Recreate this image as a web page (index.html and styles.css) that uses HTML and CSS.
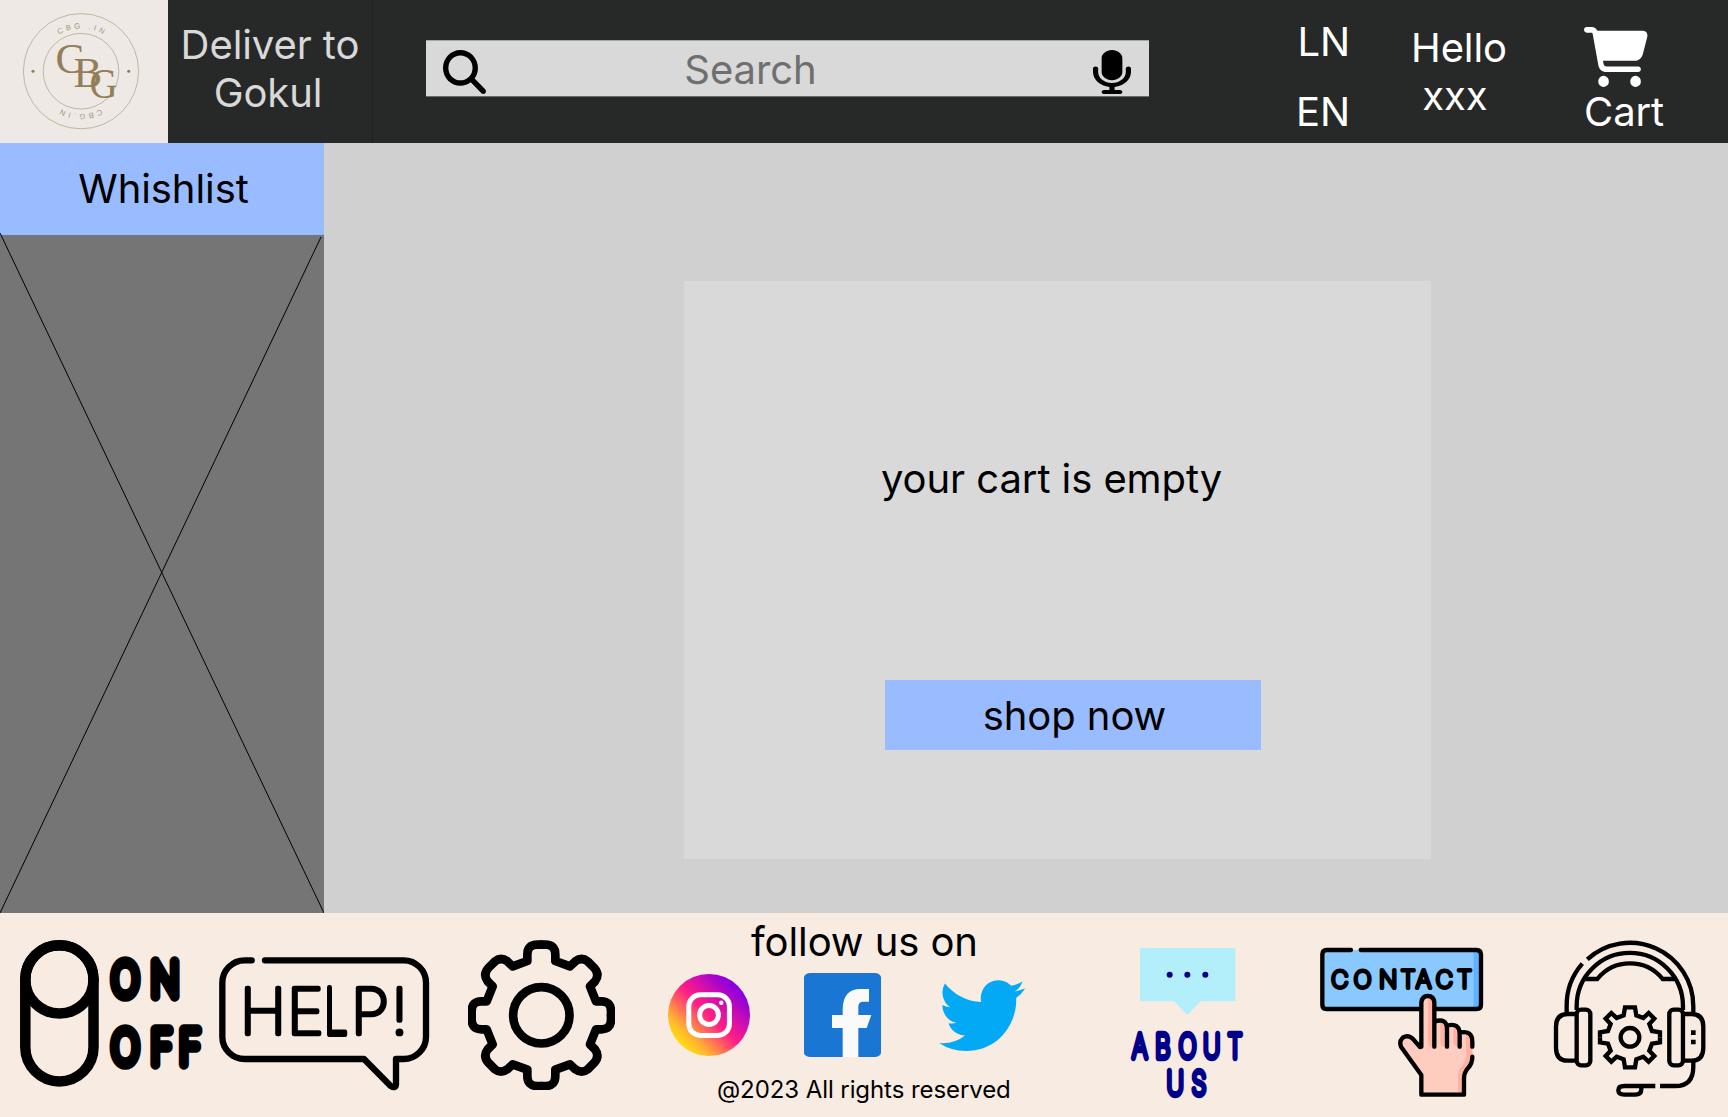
FILE: index.html
```html
<!DOCTYPE html>
<html lang="en">
<head>
<meta charset="utf-8">
<title>Cart</title>
<link rel="stylesheet" href="styles.css">
</head>
<body>
<header class="topbar">
  <svg class="logo" viewBox="0 0 168 143">
    <defs>
      <path id="arc-top" d="M38.2 71.2A42.8 42.8 0 0 1 123.8 71.2"/>
      <path id="arc-bottom" d="M123.8 71.2A42.8 42.8 0 0 1 38.2 71.2"/>
    </defs>
    <g class="logo-rings"><circle cx="81" cy="71.2" r="57.6"/><circle cx="81" cy="71.2" r="37.8"/></g>
    <g class="logo-ink"><circle cx="33" cy="71.3" r="1.5"/><circle cx="128.7" cy="71.3" r="1.5"/></g>
    <text class="logo-ring-text" text-anchor="middle"><textPath href="#arc-top" startOffset="51%">CBG .IN</textPath></text>
    <text class="logo-ring-text" text-anchor="middle"><textPath href="#arc-bottom" startOffset="51%">CBG.IN</textPath></text>
    <g class="logo-mono">
      <text transform="translate(55.5 73)">C</text>
      <text transform="translate(73.5 86.5)">B</text>
      <text transform="translate(89.5 98.3) scale(.9 1)">G</text>
    </g>
  </svg>
  <div class="deliver">Deliver to<br><span class="name">Gokul</span></div>
  <div class="search">
    <svg class="search-icon" viewBox="0 0 512 512" preserveAspectRatio="none"><path d="M416 208c0 45.9-14.9 88.3-40 122.7L502.6 457.4c12.5 12.5 12.5 32.8 0 45.3s-32.8 12.5-45.3 0L330.7 376c-34.4 25.2-76.8 40-122.7 40C93.1 416 0 322.9 0 208S93.1 0 208 0S416 93.1 416 208zM208 352a144 144 0 1 0 0-288 144 144 0 1 0 0 288z"/></svg>
    <span class="search-label">Search</span>
    <svg class="mic-icon" viewBox="16 0 352 512" preserveAspectRatio="none"><path d="M192 0C139 0 96 43 96 96V256c0 53 43 96 96 96s96-43 96-96V96c0-53-43-96-96-96zM64 216c0-13.3-10.7-24-24-24s-24 10.7-24 24v40c0 89.1 66.2 162.7 152 174.4V464H120c-13.3 0-24 10.7-24 24s10.7 24 24 24h144c13.3 0 24-10.7 24-24s-10.7-24-24-24H216V430.4c85.8-11.7 152-85.3 152-174.4V216c0-13.3-10.7-24-24-24s-24 10.7-24 24v40c0 70.7-57.3 128-128 128s-128-57.3-128-128V216z"/></svg>
  </div>
  <div class="lang"><span>LN</span><span>EN</span></div>
  <div class="hello"><span>Hello</span><span class="user">xxx</span></div>
  <div class="cart">
    <svg class="cart-icon" viewBox="0 0 576 512" preserveAspectRatio="none"><path d="M0 24C0 10.7 10.7 0 24 0H69.5c22 0 41.5 12.8 50.6 32h411c26.3 0 45.5 25 38.6 50.4l-41 152.3c-8.5 31.4-37 53.3-69.5 53.3H170.7l5.4 28.5c2.2 11.3 12.1 19.5 23.6 19.5H488c13.3 0 24 10.7 24 24s-10.7 24-24 24H199.7c-34.6 0-64.3-24.6-70.7-58.5L77.4 54.5c-.7-3.8-4-6.5-7.9-6.5H24C10.7 48 0 37.3 0 24zM128 464a48 48 0 1 1 96 0 48 48 0 1 1-96 0zm336-48a48 48 0 1 1 0 96 48 48 0 1 1 0-96z"/></svg>
    <span>Cart</span>
  </div>
</header>
<main class="content">
  <aside class="sidebar">
    <div class="wishlist">Whishlist</div>
    <svg class="placeholder" viewBox="0 0 324 678"><path d="M0-2L324 678M321 2L0 678"/></svg>
  </aside>
  <section class="stage">
    <div class="card">
      <p class="empty">your cart is empty</p>
      <button class="shop">shop now</button>
    </div>
  </section>
</main>
<footer class="footer">
  <svg class="toggle" viewBox="0 900 210 204">
    <g class="line w10"><rect x="25.3" y="945.3" width="68.2" height="136.1" rx="34.1"/><circle cx="59.4" cy="979.4" r="34.1"/></g>
    <text class="toggle-text" transform="scale(.8 1)" x="139.5 188.5" y="996.5">ON</text>
    <text class="toggle-text" transform="scale(.8 1)" x="139.5 188.5 224" y="1064.5">OFF</text>
  </svg>
  <svg class="help" viewBox="24 48 636 408">
    <path class="line w19" d="M125 61H104A67 67 0 0 0 37 128V290A67 67 0 0 0 104 357H462L542 438Q558 447 558 432V357H580A67 67 0 0 0 648 290V128A67 67 0 0 0 581 61H165"/>
    <text class="help-text" x="90 231" y="281">HE</text>
    <text class="help-text narrow" transform="translate(343 281) scale(.67 1)">L</text>
    <text class="help-text" x="423 543" y="281">P!</text>
  </svg>
  <svg class="gear" viewBox="-220 -226 441 452">
    <defs><path id="cog" d="M0-212H-12Q-42-212-42-182V-163L-86-147L-102-162Q-121-176-139-162L-159-142Q-176-122-161-102L-146-87L-164-42H-180Q-209-42-209-12V0"/></defs>
    <g class="line w26"><use href="#cog"/><use href="#cog" transform="scale(-1 1)"/><use href="#cog" transform="scale(1 -1)"/><use href="#cog" transform="scale(-1 -1)"/><circle r="84.5"/></g>
  </svg>
  <div class="social">
    <p class="follow">follow us on</p>
    <div class="networks">
      <svg class="instagram" viewBox="0 0 82 82">
        <defs><linearGradient id="ig" x1=".15" y1=".85" x2=".85" y2=".15"><stop offset="0" stop-color="#ffdb17"/><stop offset=".15" stop-color="#ffb52e"/><stop offset=".5" stop-color="#ff1f86"/><stop offset=".62" stop-color="#e8159a"/><stop offset=".95" stop-color="#9100dc"/></linearGradient></defs>
        <circle cx="41" cy="41" r="41" fill="url(#ig)"/>
        <g fill="none" stroke="#fff" stroke-width="5"><rect x="20.8" y="20.8" width="40.6" height="40.6" rx="11.5"/><circle cx="41" cy="41" r="9.4"/></g>
        <circle cx="53.3" cy="28.8" r="2.2" fill="#fff"/>
      </svg>
      <svg class="facebook" viewBox="492 189 231 252" preserveAspectRatio="none">
        <rect x="492" y="189" width="231" height="252" rx="20" ry="13" fill="#1976d2"/>
        <path fill="#fafafa" d="M608 441V354H576V315H608V296Q610 237 661 237H687V275H670Q655 275 655 290V315H694L680 354H655V441Z"/>
      </svg>
      <svg class="twitter" viewBox="0 2.2 24 19.55" preserveAspectRatio="none"><path fill="#03a9f4" d="M23.953 4.57a10 10 0 01-2.825.775 4.958 4.958 0 002.163-2.723c-.951.555-2.005.959-3.127 1.184a4.92 4.92 0 00-8.384 4.482C7.69 8.095 4.067 6.13 1.64 3.162a4.822 4.822 0 00-.666 2.475c0 1.71.87 3.213 2.188 4.096a4.904 4.904 0 01-2.228-.616v.06a4.923 4.923 0 003.946 4.827 4.996 4.996 0 01-2.212.085 4.936 4.936 0 004.604 3.417 9.867 9.867 0 01-6.102 2.105c-.39 0-.779-.023-1.17-.067a13.995 13.995 0 007.557 2.209c9.053 0 13.998-7.496 13.998-13.985 0-.21 0-.42-.015-.63A9.935 9.935 0 0024 4.59z"/></svg>
    </div>
    <p class="copyright">@2023 All rights reserved</p>
  </div>
  <svg class="about" viewBox="60 48 345 462">
    <path fill="#b3effb" d="M90 54H376V214H272L232 255L192 214H90Z"/>
    <g fill="#00008b"><circle cx="179" cy="134" r="9"/><circle cx="232" cy="134" r="9"/><circle cx="286" cy="134" r="9"/></g>
    <text class="about-text" transform="scale(.72 1)" x="93 189 286 389 491" y="383">ABOUT</text>
    <text class="about-text" transform="scale(.72 1)" x="237 341" y="495">US</text>
  </svg>
  <svg class="contact" viewBox="57 48 495 456">
    <rect x="66" y="60" width="477" height="177" rx="12" fill="#8ac9ff"/>
    <path fill="#60b1ff" d="M521 60H543V237H521Z"/>
    <path class="line w13" d="M153 60H80Q67 60 67 73V224Q67 237 80 237H529Q543 237 543 224V73Q543 60 529 60H182"/>
    <text class="contact-text" x="94 161 237 302 348 407 472" y="174">CONTACT</text>
    <path fill="#ffcdc0" d="M364 350V218Q366 198 383 198Q402 198 403 218V275Q440 262 441 288Q478 277 479 308Q517 300 517 335V380Q517 400 505 413Q492 428 492 445V494H364V435L304 352Q296 335 308 323Q325 312 340 328L360 351Z"/>
    <path fill="#ffb1a3" d="M388 200Q402 205 403 218V354Q384 352 384 335V212ZM420 272Q440 268 441 290V352Q421 352 421 335ZM460 284Q478 285 479 310V352Q460 350 460 335ZM498 308Q517 310 517 335V380Q517 400 505 413Q492 428 492 445V490H474V435Q474 420 486 408Q498 395 498 376Z"/>
    <path class="line w13" d="M360 351L340 328Q325 312 308 323Q296 335 304 352L364 435V494H492V445Q492 428 505 413Q517 400 517 380M364 350V218Q366 198 383 198Q402 198 403 218V350M403 275Q441 262 441 298V350M441 287Q479 277 479 312V350M479 308Q517 300 517 335V350"/>
  </svg>
  <svg class="headset" viewBox="68 60 460 474">
    <defs><path id="small-cog" d="M0-90H-15L-19-66L-40-58L-56-73L-73-56L-58-40L-66-19L-90-15V0"/></defs>
    <g class="line w13 butt">
      <path d="M489 277V259A190 190 0 0 0 171 118M156 131A190 190 0 0 0 109 259V277"/>
      <path d="M139 270V258A159.5 159.5 0 0 1 458 258V270M160 177H201A126 126 0 0 1 397 177H437"/>
      <rect x="139" y="269" width="41" height="167" rx="13"/><rect x="417" y="269" width="41" height="167" rx="13"/>
      <path d="M139 282H112Q77 282 77 320V383Q77 422 112 422H139M458 282H484Q519 282 519 320V383Q519 422 484 422H458"/>
      <path d="M489 425V440Q489 498 435 498H389M375 498H282Q264 498 264 511Q264 524 282 524H315Q333 524 333 508V498"/>
      <g transform="translate(299 352)"><use href="#small-cog"/><use href="#small-cog" transform="scale(-1 1)"/><use href="#small-cog" transform="scale(1 -1)"/><use href="#small-cog" transform="scale(-1 -1)"/><circle r="28"/></g>
    </g>
    <path d="M482 331H496V345H482ZM482 359H496V373H482Z"/>
  </svg>
</footer>
</body>
</html>
```

FILE: styles.css
```css
* { box-sizing: border-box; }
body {
  margin: 0;
  width: 1728px;
  height: 1117px;
  overflow: hidden;
  display: flex;
  flex-direction: column;
  font-family: Inter, "Liberation Sans", sans-serif;
  font-size: 40px;
  line-height: 48px;
  letter-spacing: -.08px;
  color: #000;
}
p { margin: 0; }
svg { display: block; flex: none; overflow: visible; letter-spacing: 0; }

.topbar { display: flex; height: 143px; background: #272928; color: #fff; }
.logo { width: 168px; height: 143px; background: #eee9e5; }
.logo-rings { fill: none; stroke: #b5a88f; stroke-width: .8; }
.logo-ink { fill: #927a52; }
.logo-ring-text { font: 7.6px "Liberation Sans", sans-serif; letter-spacing: 3px; fill: #a3967c; }
.logo-mono { font: 43px "Liberation Serif", serif; fill: #947e58; }
.deliver { width: 205px; padding-top: 21px; text-align: center; color: #d9d9d9; border-right: 1px solid #202221; }
.name { padding-right: 4px; }
.search {
  display: flex;
  align-items: center;
  justify-content: space-between;
  width: 723px;
  height: 57px;
  margin: 40px 0 0 53px;
  padding: 0 18px 0 17px;
  background: #d9d9d9;
  border-top: 1px solid #a4a8a5;
  border-bottom: 1px solid #6a6c6b;
}
.search-icon { width: 43px; height: 44px; margin-top: 6px; }
.search-label { margin: 3px 78px 0 0; color: #6f6f6f; }
.mic-icon { width: 38px; height: 44px; margin-top: 6px; }
.lang { display: flex; flex-direction: column; gap: 22px; width: 54px; margin-left: 147px; padding-top: 18px; text-align: right; }
.hello { display: flex; flex-direction: column; align-items: center; width: 100px; margin-left: 59px; padding-top: 24px; }
.user { margin-right: 8px; }
.cart { width: 90px; margin-left: 75px; padding-top: 27px; }
.cart-icon { width: 64px; height: 60px; margin-bottom: 1px; fill: #fff; }

.content { display: flex; height: 770px; }
.sidebar { width: 324px; background: #757575; }
.wishlist { height: 92px; padding: 22px 0 0 3px; text-align: center; background: #99bbff; }
.placeholder { width: 324px; height: 678px; fill: none; stroke: #000; }
.stage { flex: 1; padding: 138px 0 0 360px; background: #d0d0d0; }
.card { width: 747px; height: 578px; padding: 174px 170px 0 201px; background: #d9d9d9; }
.empty { margin-left: -4px; white-space: nowrap; }
.shop {
  display: block;
  width: 376px;
  height: 70px;
  margin-top: 177px;
  padding: 2px 0 0 3px;
  border: 0;
  background: #99bbff;
  color: #000;
  font: inherit;
  letter-spacing: inherit;
}

.footer { display: flex; height: 204px; background: #f8ebe1; }
.line { fill: none; stroke: #000; stroke-linecap: round; stroke-linejoin: round; }
.w10 { stroke-width: 10.5; }
.w13 { stroke-width: 13; }
.w19 { stroke-width: 19; }
.w26 { stroke-width: 26; }
.butt { stroke-linecap: butt; stroke-linejoin: miter; }
.toggle { width: 210px; height: 204px; margin-top: -13px; }
.toggle-text, .help-text, .about-text, .contact-text { font-family: Inter, sans-serif; font-weight: 100; stroke-linejoin: round; stroke-linecap: round; }
.toggle-text { font-size: 46px; stroke: #000; stroke-width: 11.5px; }
.help { width: 212px; height: 136px; margin: 43px 0 0 8px; }
.help-text { font-size: 188px; stroke: #000; stroke-width: 14px; }
.narrow { stroke-width: 18px; }
.gear { width: 147px; height: 150.7px; margin: 26.7px 0 0 38px; overflow: hidden; }
.social { width: 310px; margin-left: 94px; padding-top: 5px; }
.follow { padding-left: 42px; }
.networks { display: flex; align-items: center; height: 84px; margin-top: 7px; margin-left: -41px; white-space: nowrap; }
.instagram { width: 82px; height: 82px; }
.facebook { width: 77px; height: 84px; margin-left: 53.5px; }
.twitter { width: 86px; height: 71px; margin-left: 58.5px; }
.copyright { margin-top: 18px; padding-left: 8px; font-size: 24px; line-height: 29px; }
.about { width: 115px; height: 154px; margin: 33px 0 0 111px; }
.about-text { font-size: 98px; fill: #00008b; stroke: #00008b; stroke-width: 19px; }
.contact { width: 165px; height: 152px; margin: 33px 0 0 74px; }
.contact-text { font-size: 71px; stroke: #000; stroke-width: 12px; }
.headset { width: 153.3px; height: 158px; margin: 27px 0 0 68.7px; }
```
